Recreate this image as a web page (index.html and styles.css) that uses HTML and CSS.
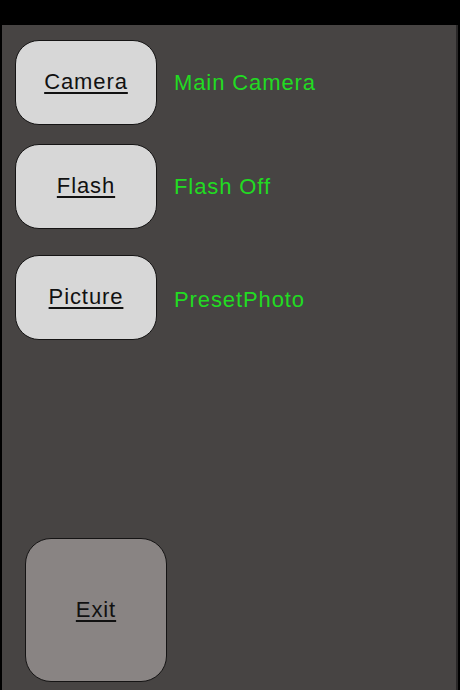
FILE: index.html
```html
<!DOCTYPE html>
<html>
<head>
<meta charset="utf-8">
<link rel="stylesheet" href="styles.css">
</head>
<body>
<div class="topbar"></div>
<div class="panel">
  <div class="row row-camera">
    <div class="btn"><span>Camera</span></div>
    <div class="label">Main Camera</div>
  </div>
  <div class="row row-flash">
    <div class="btn"><span>Flash</span></div>
    <div class="label">Flash Off</div>
  </div>
  <div class="row row-picture">
    <div class="btn"><span>Picture</span></div>
    <div class="label label-low">PresetPhoto</div>
  </div>
  <div class="exit"><span>Exit</span></div>
</div>
</body>
</html>
```
FILE: styles.css
```css
html, body {
  margin: 0;
  padding: 0;
  background: #000;
  width: 460px;
  height: 690px;
  overflow: hidden;
  font-family: "Liberation Sans", Arial, sans-serif;
}
.topbar {
  height: 25px;
  background: #000;
}
.panel {
  margin-left: 2px;
  width: 456px;
  height: 665px;
  background: #474443;
  border-right: 2px solid #2a2828;
  display: flex;
  flex-direction: column;
  box-sizing: border-box;
  padding-left: 13px;
}
.row {
  display: flex;
  align-items: center;
}
.row-camera { margin-top: 15px; }
.row-flash { margin-top: 19px; }
.row-picture { margin-top: 26px; }
.btn, .exit {
  box-sizing: border-box;
  width: 142px;
  height: 85px;
  border: 1px solid #151414;
  border-radius: 24px;
  background: #d7d7d7;
  display: flex;
  align-items: center;
  justify-content: center;
  color: #111;
  font-size: 22px;
  letter-spacing: 0.9px;
}
.btn span, .exit span {
  text-decoration: underline;
  text-underline-offset: 3px;
  text-decoration-thickness: 2px;
}
.btn span { margin-top: -2px; }
.label {
  margin-left: 17px;
  color: #22db22;
  font-size: 22px;
  letter-spacing: 0.9px;
}
.label-low { margin-top: 5px; }
.exit {
  margin-top: auto;
  margin-bottom: 8px;
  margin-left: 10px;
  height: 144px;
  border-radius: 26px;
  background: #898483;
}
```
